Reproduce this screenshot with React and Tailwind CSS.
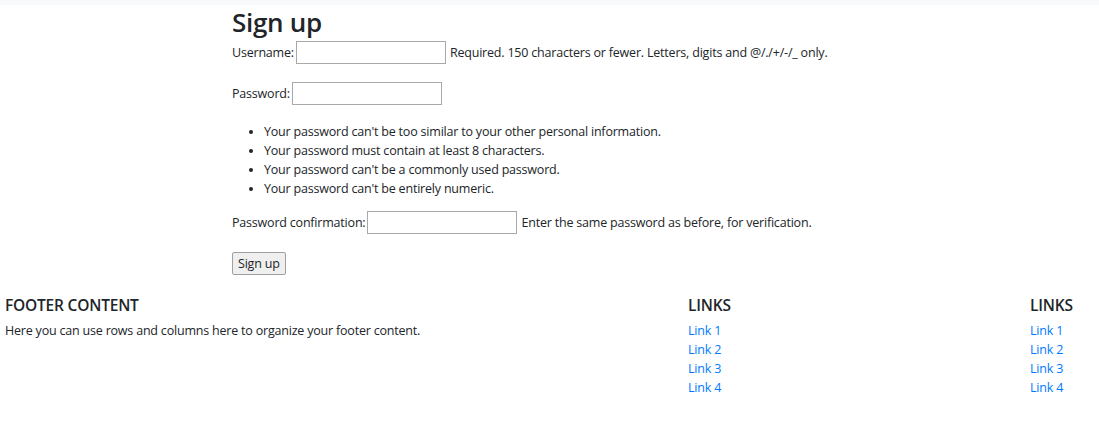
import React from "react";

const font = { fontFamily: '"Open Sans", "Noto Sans", sans-serif' };

const Row = ({ label, hint, className = "" }) => (
  <div className={`flex items-center h-[23px] ${className}`}>
    <label className="mr-[2px]">{label}</label>
    <input type="text" className="w-[150px] h-[23px] border border-[#a9a9a9] bg-white" />
    {hint && <span className="ml-[4px]">{hint}</span>}
  </div>
);

const LinkCol = () => (
  <div>
    <h5 className="text-[15.5px] leading-[19px] font-[550] uppercase tracking-[-0.2px]">Links</h5>
    <ul className="mt-[6px]">
      {["Link 1", "Link 2", "Link 3", "Link 4"].map((l) => (
        <li key={l}>
          <a href="#" className="text-[#007bff]">{l}</a>
        </li>
      ))}
    </ul>
  </div>
);

export default function App() {
  return (
    <div
      className="min-h-[422px] bg-white text-[#212529] text-[12.5px] leading-[19px] tracking-[-0.2px]"
      style={font}
    >
      <div className="h-[5px] bg-[#f8f9fa]" />
      <main className="pl-[232px]">
        <h2 className="text-[26px] leading-[31px] font-[550] tracking-[-0.3px] mt-[2px]">Sign up</h2>
        <form>
          <Row
            className="mt-[3px]"
            label="Username:"
            hint="Required. 150 characters or fewer. Letters, digits and @/./+/-/_ only."
          />
          <Row className="mt-[18px]" label="Password:" />
          <ul className="list-disc pl-[32px] mt-[17px]">
            <li>Your password can't be too similar to your other personal information.</li>
            <li>Your password must contain at least 8 characters.</li>
            <li>Your password can't be a commonly used password.</li>
            <li>Your password can't be entirely numeric.</li>
          </ul>
          <Row
            className="mt-[13px]"
            label="Password confirmation:"
            hint="Enter the same password as before, for verification."
          />
          <button
            type="button"
            className="mt-[18px] h-[23px] px-[5px] bg-[#efefef] border border-[#a0a0a0] rounded-[2px]"
          >
            Sign up
          </button>
        </form>
      </main>
      <footer className="flex pl-[5px] mt-[21px]">
        <div className="w-[683px]">
          <h5 className="text-[15.5px] leading-[19px] font-[550] uppercase tracking-[-0.2px]">Footer Content</h5>
          <p className="mt-[6px]">Here you can use rows and columns here to organize your footer content.</p>
        </div>
        <div className="w-[342px]">
          <LinkCol />
        </div>
        <LinkCol />
      </footer>
    </div>
  );
}
